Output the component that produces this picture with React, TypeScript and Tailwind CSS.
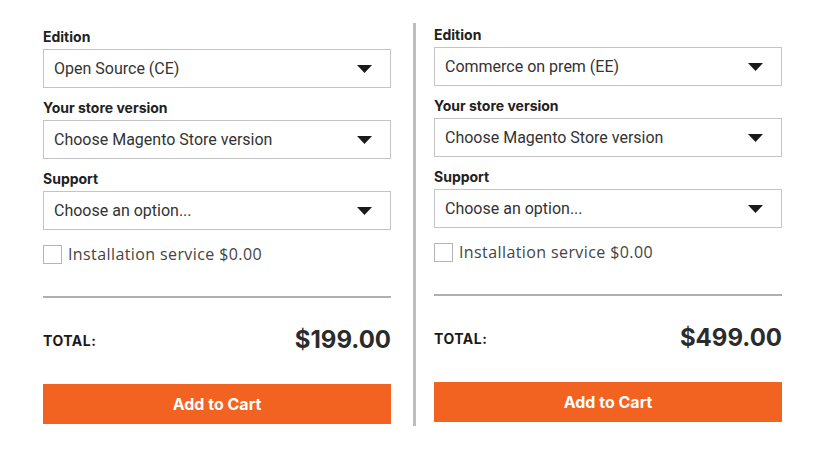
import React from 'react';

interface PlanProps {
  edition: string;
  total: string;
}

function Caret() {
  return (
    <svg width="15" height="8" viewBox="0 0 15 8" className="shrink-0">
      <path d="M0 0 H15 L7.5 8 Z" fill="#1a1a1a" />
    </svg>
  );
}

function Select({ value }: { value: string }) {
  return (
    <div className="flex items-center justify-between h-[39px] border border-[#c4c4c4] pl-[10px] pr-[18px] text-[16px] text-[#333] font-['Roboto',sans-serif]">
      <span>{value}</span>
      <Caret />
    </div>
  );
}

function Label({ children }: { children: React.ReactNode }) {
  return (
    <div className="text-[14px] font-bold text-[#222] leading-[16px] mb-[4px] font-['Inter',sans-serif]">{children}</div>
  );
}

function Plan({ edition, total }: PlanProps) {
  return (
    <div className="w-[348px] flex flex-col">
      <Label>Edition</Label>
      <Select value={edition} />
      <div className="mt-[12px]">
        <Label>Your store version</Label>
        <Select value="Choose Magento Store version" />
      </div>
      <div className="mt-[12px]">
        <Label>Support</Label>
        <Select value="Choose an option..." />
      </div>
      <label className="flex items-center gap-[6px] mt-[14px]">
        <span className="w-[19px] h-[19px] border border-[#b5b5b5] bg-white" />
        <span className="text-[16px] leading-[20px] text-[#444] tracking-[0.4px] font-['Open_Sans',sans-serif]">Installation service $0.00</span>
      </label>
      <div className="h-[2px] bg-[#b0b0b0] mt-[32px]" />
      <div className="flex items-center justify-between mt-[27px] h-[30px]">
        <span className="text-[14px] font-bold text-[#1a1a1a] tracking-[0.5px] font-['Inter',sans-serif]">TOTAL:</span>
        <span className="text-[24px] font-bold text-[#2b2b2b] font-['Inter',sans-serif]">{total}</span>
      </div>
      <button className="mt-[29px] h-[40px] bg-[#f26322] text-white text-[16px] font-bold font-['Inter',sans-serif]">
        Add to Cart
      </button>
    </div>
  );
}

export default function App() {
  return (
    <div className="w-[828px] h-[455px] bg-white flex">
      <div className="pl-[43px] pt-[29px]">
        <Plan edition="Open Source (CE)" total="$199.00" />
      </div>
      <div className="ml-[22px] mt-[23px] w-[3px] h-[403px] bg-[#bdbdbd]" />
      <div className="ml-[18px] pt-[27px]">
        <Plan edition="Commerce on prem (EE)" total="$499.00" />
      </div>
    </div>
  );
}
